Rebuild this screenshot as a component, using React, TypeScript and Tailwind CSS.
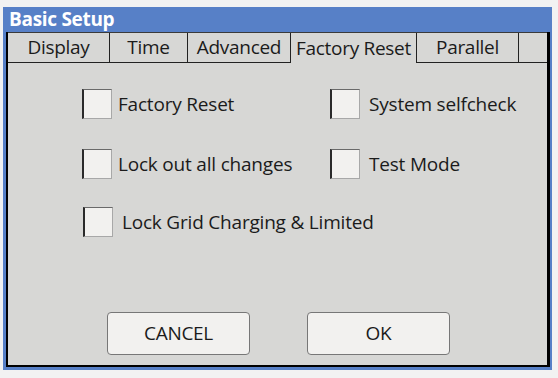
const tabs = [
  { label: "Display", w: "w-[102px]" },
  { label: "Time", w: "w-[78px]" },
  { label: "Advanced", w: "w-[103px]" },
  { label: "Factory Reset", w: "w-[126px]", active: true },
  { label: "Parallel", w: "w-[102px]" },
]

const Box = () => (
  <div className="h-[30px] w-[30px] shrink-0 border-l-2 border-t border-r border-b border-l-[#2a2a2a] border-t-[#6a6a6a] border-r-[#a8a8a8] border-b-[#a8a8a8] bg-[#f2f1ef]" />
)

const Option = ({ label, gap = "gap-[6px]" }: { label: string; gap?: string }) => (
  <div className={`flex items-center ${gap}`}>
    <Box />
    <span className="text-[19px] leading-none text-[#1b1b1b] tracking-[-0.2px]">{label}</span>
  </div>
)

export default function App() {
  return (
    <div
      className="min-h-screen bg-[#f2f2f2] pt-[7px] pl-[3px]"
      style={{ fontFamily: '"Open Sans", "Noto Sans", sans-serif' }}
    >
      <div className="flex h-[363px] w-[549px] flex-col bg-[#5780c7]">
        <div className="flex h-[25px] items-center pl-[6px] text-[19px] font-bold leading-none tracking-[-0.3px] text-white">
          Basic Setup
        </div>
        <div className="mb-[3px] ml-[3px] mr-[2px] flex flex-1 flex-col border-b-2 border-l-2 border-r-[3px] border-black bg-[#d7d7d5]">
          <div className="flex h-[31px] border-t border-[#3a3a3a]">
            {tabs.map((t) => (
              <div
                key={t.label}
                className={`${t.w} flex items-center justify-center border-r border-[#222] text-[19px] leading-none tracking-[-0.3px] text-[#1b1b1b] ${
                  t.active ? "" : "border-b"
                }`}
              >
                {t.label}
              </div>
            ))}
            <div className="flex-1 border-b border-[#222]" />
          </div>

          <div className="grid grid-cols-[248px_1fr] gap-y-[30px] pl-[74px] pt-[26px]">
            <Option label="Factory Reset" />
            <Option label="System selfcheck" gap="gap-[9px]" />
            <Option label="Lock out all changes" />
            <Option label="Test Mode" gap="gap-[9px]" />
          </div>
          <div className="mt-[28px] pl-[75px]">
            <Option label="Lock Grid Charging & Limited" gap="gap-[9px]" />
          </div>

          <div className="mt-auto flex gap-[57px] pb-[10px] pl-[99px]">
            <button className="h-[43px] w-[143px] rounded-[4px] border border-[#777] bg-[#f2f1ef] text-[19px] tracking-[-0.3px] text-[#1b1b1b]">
              CANCEL
            </button>
            <button className="h-[43px] w-[143px] rounded-[4px] border border-[#777] bg-[#f2f1ef] text-[19px] tracking-[-0.3px] text-[#1b1b1b]">
              OK
            </button>
          </div>
        </div>
      </div>
    </div>
  )
}
